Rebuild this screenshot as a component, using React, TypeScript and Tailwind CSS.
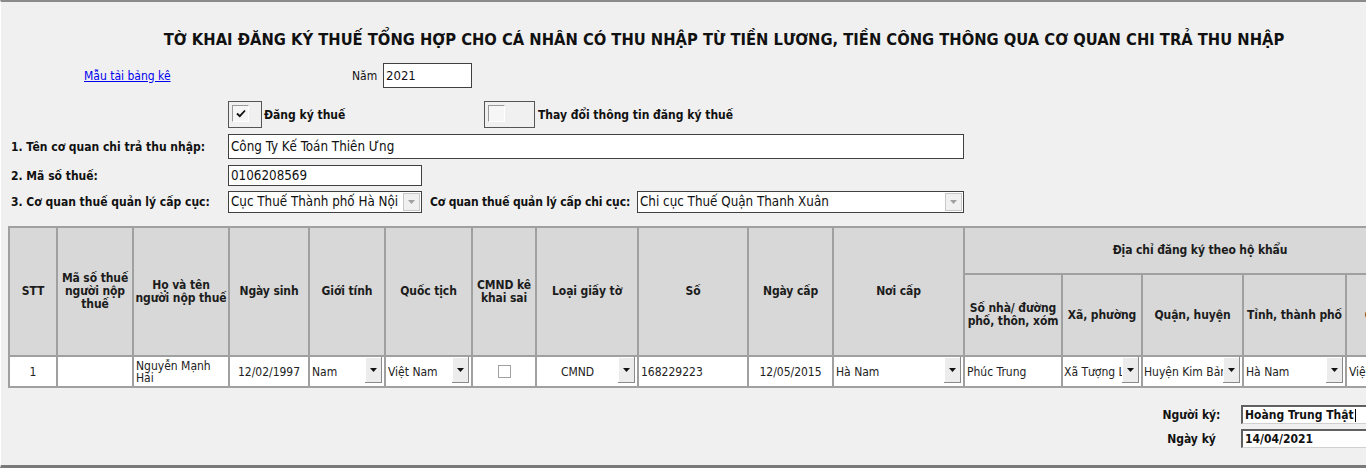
import React from "react";

const F = { fontFamily: "'DejaVu Sans Condensed', 'DejaVu Sans', sans-serif" };

function Arrow() {
  return (
    <div className="flex h-[26px] w-[17px] shrink-0 items-center justify-center self-start border-r border-b border-[#8a8a8a] bg-[#ececec] shadow-[inset_1px_1px_0_#ffffff]">
      <svg width="7" height="4" viewBox="0 0 7 4">
        <path d="M0 0H7L3.5 4Z" fill="#111" />
      </svg>
    </div>
  );
}

function DisabledArrow() {
  return (
    <div className="flex h-[18px] w-[17px] shrink-0 items-center justify-center border border-[#c8c8c8] bg-[#f0f0f0]">
      <svg width="7" height="4" viewBox="0 0 7 4">
        <path d="M0 0H7L3.5 4Z" fill="#a0a0a0" />
      </svg>
    </div>
  );
}

function Check({ checked }: { checked?: boolean }) {
  return (
    <div className="mt-[3px] ml-[3px] flex h-[17px] w-[17px] items-center justify-center border-t border-l border-[#9a9a9a] border-r border-b border-r-white border-b-white bg-[#f6f6f6]">
      {checked && (
        <svg width="10" height="9" viewBox="0 0 10 9">
          <path d="M1 4.5L3.8 7.2L9 1.5" stroke="#111" strokeWidth="1.8" fill="none" />
        </svg>
      )}
    </div>
  );
}

const H = "flex items-center justify-center bg-[#d8d8d8] text-center font-bold leading-[13px] text-[#1c1c1c] whitespace-nowrap tracking-[-0.1px]";
const D = "flex items-center bg-white text-[#222] overflow-hidden whitespace-nowrap";

export default function App() {
  return (
    <div className="w-full overflow-hidden">
      <div
        style={F}
        className="relative h-[468px] w-[1366px] overflow-hidden border-t-2 border-b-[3px] border-l border-t-[#8a8a8a] border-b-[#7a7a7a] border-l-white bg-[#f0f0f0] text-[12px] text-[#111]"
      >
        {/* Title */}
        <div className="mt-[28px] h-[20px] whitespace-nowrap pl-[81px] text-center text-[16.4px] font-bold leading-[20px] text-[#111]">
          TỜ KHAI ĐĂNG KÝ THUẾ TỔNG HỢP CHO CÁ NHÂN CÓ THU NHẬP TỪ TIỀN LƯƠNG, TIỀN CÔNG THÔNG QUA CƠ QUAN CHI TRẢ THU NHẬP
        </div>

        {/* Link + year */}
        <div className="mt-[13px] flex h-[25px] items-center">
          <a href="#" className="ml-[83px] w-[268px] shrink-0 text-[#0000ee] underline">
            Mẫu tải bảng kê
          </a>
          <span className="w-[31px] shrink-0">Năm</span>
          <div className="flex h-[25px] w-[89px] items-center border border-[#404040] bg-white pl-[2px] text-[13px]">2021</div>
        </div>

        {/* Checkboxes */}
        <div className="mt-[13px] flex h-[27px] items-center">
          <div className="ml-[227px] h-[27px] w-[34px] shrink-0 border border-[#555]">
            <Check checked />
          </div>
          <span className="ml-[2px] w-[220px] shrink-0 font-bold">Đăng ký thuế</span>
          <div className="h-[27px] w-[51px] shrink-0 border border-[#555]">
            <Check />
          </div>
          <span className="ml-[3px] font-bold">Thay đổi thông tin đăng ký thuế</span>
        </div>

        {/* Row 1 */}
        <div className="mt-[6px] flex h-[25px] items-center">
          <span className="w-[227px] shrink-0 whitespace-nowrap pl-[10px] font-bold">1. Tên cơ quan chi trả thu nhập:</span>
          <div className="flex h-[25px] w-[736px] shrink-0 items-center border border-[#404040] bg-white pl-[2px] text-[13.3px]">
            Công Ty Kế Toán Thiên Ưng
          </div>
        </div>

        {/* Row 2 */}
        <div className="mt-[6px] flex h-[21px] items-center">
          <span className="w-[227px] shrink-0 pl-[10px] font-bold">2. Mã số thuế:</span>
          <div className="flex h-[21px] w-[194px] shrink-0 items-center border border-[#404040] bg-white pl-[2px] text-[13.3px]">
            0106208569
          </div>
        </div>

        {/* Row 3 */}
        <div className="mt-[5px] flex h-[22px] items-center">
          <span className="w-[227px] shrink-0 whitespace-nowrap pl-[10px] font-bold">3. Cơ quan thuế quản lý cấp cục:</span>
          <div className="flex h-[22px] w-[194px] shrink-0 items-center justify-between border border-[#404040] bg-white pl-[2px] pr-[1px] text-[13.3px]">
            <span className="whitespace-nowrap">Cục Thuế Thành phố Hà Nội</span>
            <DisabledArrow />
          </div>
          <span className="ml-[8px] w-[207px] shrink-0 whitespace-nowrap font-bold tracking-[-0.15px]">Cơ quan thuế quản lý cấp chi cục:</span>
          <div className="flex h-[22px] w-[327px] shrink-0 items-center justify-between border border-[#404040] bg-white pl-[2px] pr-[1px] text-[13.3px]">
            <span className="whitespace-nowrap">Chi cục Thuế Quận Thanh Xuân</span>
            <DisabledArrow />
          </div>
        </div>

        {/* Table */}
        <div className="mt-[13px] ml-[7px] grid w-max grid-cols-[46px_74px_94px_78px_74px_85px_62px_100px_108px_83px_129px_96px_78px_99px_101px_88px] grid-rows-[45px_80px_29px] gap-[2px] bg-[#a0a0a0] p-[2px]">
          <div className={`${H} row-span-2`}>STT</div>
          <div className={`${H} row-span-2`}>
            Mã số thuế
            <br />
            người nộp
            <br />
            thuế
          </div>
          <div className={`${H} row-span-2`}>
            Họ và tên
            <br />
            người nộp thuế
          </div>
          <div className={`${H} row-span-2`}>Ngày sinh</div>
          <div className={`${H} row-span-2`}>Giới tính</div>
          <div className={`${H} row-span-2`}>Quốc tịch</div>
          <div className={`${H} row-span-2`}>
            CMND kê
            <br />
            khai sai
          </div>
          <div className={`${H} row-span-2`}>Loại giấy tờ</div>
          <div className={`${H} row-span-2`}>Số</div>
          <div className={`${H} row-span-2`}>Ngày cấp</div>
          <div className={`${H} row-span-2`}>Nơi cấp</div>
          <div className={`${H} col-span-5`}>Địa chỉ đăng ký theo hộ khẩu</div>
          <div className={H}>
            Số nhà/ đường
            <br />
            phố, thôn, xóm
          </div>
          <div className={H}>Xã, phường</div>
          <div className={H}>Quận, huyện</div>
          <div className={H}>Tỉnh, thành phố</div>
          <div className={H}>Quốc gia</div>

          {/* Data row */}
          <div className={`${D} justify-center`}>1</div>
          <div className={D}></div>
          <div className="flex items-center overflow-hidden bg-white pl-[2px] text-[12px] leading-[12px] text-[#222]">
            <span>
              Nguyễn Mạnh
              <br />
              Hải
            </span>
          </div>
          <div className={`${D} justify-center`}>12/02/1997</div>
          <div className={`${D} justify-between pl-[2px] pr-[2px]`}>
            <span>Nam</span>
            <Arrow />
          </div>
          <div className={`${D} justify-between pl-[2px] pr-[2px]`}>
            <span>Việt Nam</span>
            <Arrow />
          </div>
          <div className={`${D} justify-center`}>
            <div className="h-[13px] w-[13px] border border-[#a0a0a0] bg-white" />
          </div>
          <div className={`${D} pr-[2px]`}>
            <span className="flex-1 text-center">CMND</span>
            <Arrow />
          </div>
          <div className={`${D} pl-[2px]`}>168229223</div>
          <div className={`${D} justify-center`}>12/05/2015</div>
          <div className={`${D} justify-between pl-[2px] pr-[2px]`}>
            <span>Hà Nam</span>
            <Arrow />
          </div>
          <div className={`${D} pl-[2px]`}>Phúc Trung</div>
          <div className={`${D} pr-[2px]`}>
            <span className="w-[59px] shrink-0 overflow-hidden pl-[1px]">Xã Tượng Lĩnh</span>
            <Arrow />
          </div>
          <div className={`${D} pr-[2px]`}>
            <span className="w-[80px] shrink-0 overflow-hidden pl-[1px]">Huyện Kim Bảng</span>
            <Arrow />
          </div>
          <div className={`${D} justify-between pl-[2px] pr-[2px]`}>
            <span>Hà Nam</span>
            <Arrow />
          </div>
          <div className={`${D} justify-between pl-[2px] pr-[2px]`}>
            <span>Việt Nam</span>
            <Arrow />
          </div>
        </div>

        {/* Signer */}
        <div className="mt-[17px] flex h-[19px] items-center">
          <span className="ml-[1141px] w-[99px] shrink-0 text-center font-bold">Người ký:</span>
          <div className="flex h-[19px] w-[140px] shrink-0 items-center border-t-2 border-l-2 border-r border-b border-t-[#606060] border-l-[#606060] border-r-[#d0d0d0] border-b-[#d0d0d0] bg-white pl-[2px] font-bold">
            Hoàng Trung Thật
            <span className="ml-[1px] inline-block h-[13px] w-px bg-black" />
          </div>
        </div>
        <div className="mt-[5px] flex h-[19px] items-center">
          <span className="ml-[1141px] w-[99px] shrink-0 text-center font-bold">Ngày ký</span>
          <div className="flex h-[19px] w-[140px] shrink-0 items-center border-t-2 border-l-2 border-r border-b border-t-[#606060] border-l-[#606060] border-r-[#d0d0d0] border-b-[#d0d0d0] bg-white pl-[2px] font-bold">
            14/04/2021
          </div>
        </div>
      </div>
    </div>
  );
}
